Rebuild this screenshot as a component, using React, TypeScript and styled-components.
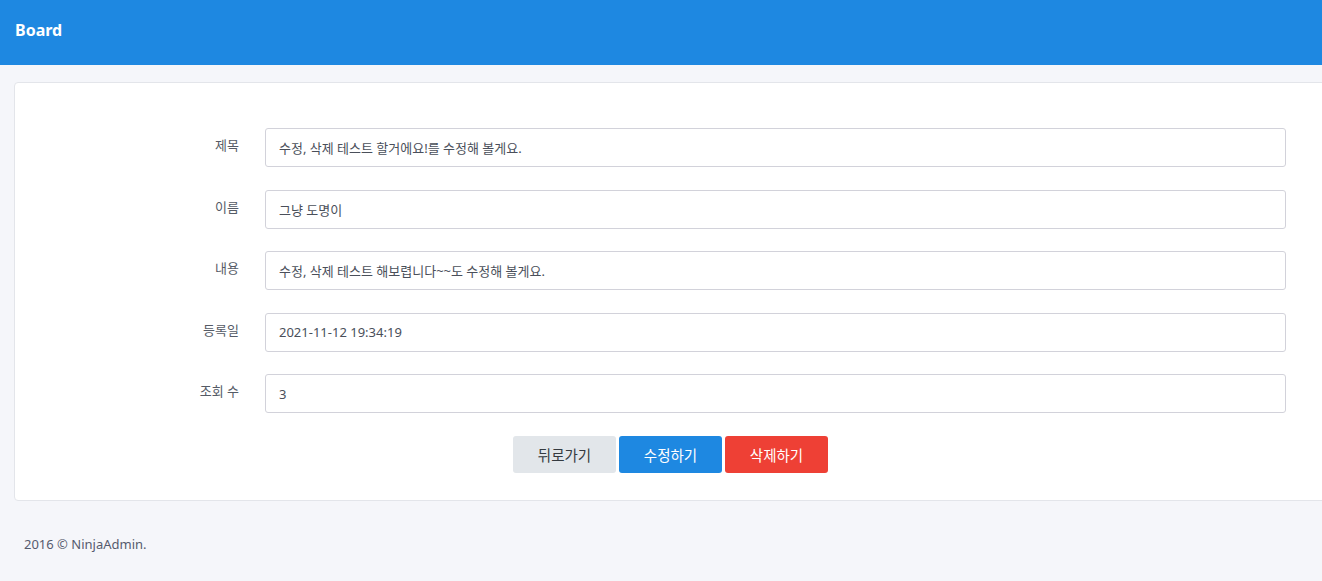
import styled, { createGlobalStyle } from 'styled-components';

const GlobalStyle = createGlobalStyle`
    html, body {
        margin: 0;
        padding: 0;
        background: #f5f6fa;
        overflow-x: hidden;
        font-family: "Noto Sans", "Noto Sans CJK KR", sans-serif;
    }
`

interface Field {
    label: string,
    value: string
}

const fields: Field[] = [
    { label: '제목', value: '수정, 삭제 테스트 할거에요!를 수정해 볼게요.' },
    { label: '이름', value: '그냥 도명이' },
    { label: '내용', value: '수정, 삭제 테스트 해보렵니다~~도 수정해 볼게요.' },
    { label: '등록일', value: '2021-11-12 19:34:19' },
    { label: '조회 수', value: '3' },
];

type Variant = 'back' | 'edit' | 'delete';

const buttonColors: Record<Variant, { bg: string, fg: string }> = {
    back: { bg: '#e2e6ea', fg: '#343a40' },
    edit: { bg: '#1e88e1', fg: '#ffffff' },
    delete: { bg: '#ee4035', fg: '#ffffff' },
};

export default function App() {

    const __renderRow = (field: Field) => {
        return (
            <FormRow key={field.label}>
                <Label>{field.label}</Label>
                <Input type="text" defaultValue={field.value} />
            </FormRow>
        )
    }

    return (
        <>
            <GlobalStyle />
            <Header>
                <Title>Board</Title>
            </Header>
            <Main>
                <Card>
                    { fields.map(__renderRow) }
                    <ButtonRow>
                        <Button variant="back">뒤로가기</Button>
                        <Button variant="edit">수정하기</Button>
                        <Button variant="delete">삭제하기</Button>
                    </ButtonRow>
                </Card>
            </Main>
            <Footer>2016 © NinjaAdmin.</Footer>
        </>
    )
}

const Header = styled.header`
    height: 65px;
    background: #1e88e1;
    display: flex;
    align-items: center;
    padding: 0 15px;
`

const Title = styled.h1`
    margin: 0;
    color: #ffffff;
    font-size: 16px;
    font-weight: 700;
    margin-top: -5px;
`

const Main = styled.main`
    padding: 17px 0 0 14px;
`

const Card = styled.section`
    width: 1313px;
    box-sizing: border-box;
    background: #ffffff;
    border: 1px solid #e3e5ea;
    border-radius: 4px;
    padding: 45px 0 27px;
    display: flex;
    flex-direction: column;
    gap: 22.5px;
`

const FormRow = styled.div`
    display: grid;
    grid-template-columns: 224px 1021px;
    column-gap: 26px;
    align-items: center;
`

const Label = styled.label`
    text-align: right;
    font-size: 13px;
    color: #555b66;
    margin-top: -6px;
`

const Input = styled.input`
    height: 39px;
    box-sizing: border-box;
    border: 1px solid #d2d2da;
    border-radius: 3px;
    padding: 0 13px;
    font-family: "Noto Sans", "Noto Sans CJK KR", sans-serif;
    font-size: 13px;
    color: #4a4f5a;
    outline: none;
`

const ButtonRow = styled.div`
    display: flex;
    justify-content: center;
    gap: 3px;
`

const Button = styled.button<{ variant: Variant }>`
    width: 103px;
    height: 37px;
    border: none;
    border-radius: 3px;
    font-family: "Noto Sans CJK KR", sans-serif;
    font-size: 14.5px;
    background: ${(props) => buttonColors[props.variant].bg};
    color: ${(props) => buttonColors[props.variant].fg};
    cursor: pointer;
`

const Footer = styled.footer`
    padding: 34px 24px;
    font-size: 13px;
    color: #555b6e;
`
